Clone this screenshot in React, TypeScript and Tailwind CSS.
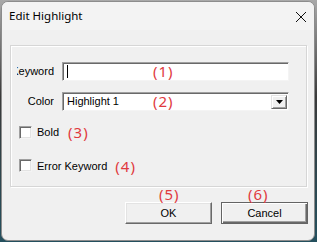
import React from "react";

const ui = { fontFamily: '"Liberation Sans", Arial, sans-serif' };
const red = { fontFamily: '"Noto Sans", "Open Sans", sans-serif' };

function Anno({ n, className }: { n: number; className?: string }) {
  return (
    <span
      style={red}
      className={`text-[15px] leading-[16px] tracking-[1px] text-[#e03a3e] whitespace-nowrap ${className ?? ""}`}
    >
      ({n})
    </span>
  );
}

function CheckBox() {
  return (
    <div className="w-[13px] h-[13px] bg-white border border-t-[#a0a0a0] border-l-[#a0a0a0] border-b-[#f4f4f4] border-r-[#f4f4f4] shadow-[inset_1px_1px_0_#696969,inset_-1px_-1px_0_#e3e3e3] shrink-0" />
  );
}

function Button({ label, isDefault, anno, annoLeft }: { label: string; isDefault?: boolean; anno: number; annoLeft: string }) {
  return (
    <div className="relative">
      <Anno n={anno} className={`absolute top-[-16px] ${annoLeft}`} />
      <div
        className={`w-[87px] h-[22px] flex items-center justify-center bg-[#f0f0f0] text-[11px] text-black ${
          isDefault
            ? "border border-[#646464] shadow-[inset_1px_1px_0_#ffffff,inset_-1px_-1px_0_#696969,inset_-2px_-2px_0_#a0a0a0]"
            : "border border-t-white border-l-white border-b-[#696969] border-r-[#696969] shadow-[inset_-1px_-1px_0_#a0a0a0,inset_1px_1px_0_#e3e3e3]"
        }`}
      >
        {label}
      </div>
    </div>
  );
}

export default function App() {
  return (
    <div className="w-[317px] h-[242px] bg-[linear-gradient(180deg,#a9a9a9_0%,#3a3a3a_40%,#24505e_100%)] overflow-hidden" style={ui}>
      <div className="ml-[1px] mt-[1px] w-[314px] h-[240px] rounded-[7px] border border-[#8c8c8c] bg-[#f0f0f0] overflow-hidden flex flex-col">
        {/* title bar */}
        <div className="h-[28px] bg-[#f3f3f3] flex items-center justify-between pl-[7px] pr-[7px] shrink-0">
          <span style={{ fontFamily: '"Noto Sans", "Open Sans", sans-serif' }} className="text-[11.5px] text-black">
            Edit Highlight
          </span>
          <svg width="12" height="12" viewBox="0 0 12 12" className="mt-[1px]">
            <path d="M1 1 L11 11 M11 1 L1 11" stroke="#111" strokeWidth="1" />
          </svg>
        </div>

        {/* group box */}
        <div className="mt-[15px] ml-[8px] w-[297px] h-[142px] border border-[#d6d6d6] shadow-[inset_1px_1px_0_#ffffff,1px_1px_0_#ffffff] flex flex-col pt-[16px] text-[11px] text-black">
          {/* keyword row */}
          <div className="flex items-center">
            <div className="ml-[6px] w-[37px] overflow-hidden flex justify-end whitespace-nowrap">Keyword</div>
            <div className="relative ml-[8px] w-[227px] h-[19px] bg-white border border-t-[#a0a0a0] border-l-[#a0a0a0] border-b-[#f4f4f4] border-r-[#f4f4f4] shadow-[inset_1px_1px_0_#696969] flex items-center pl-[4px]">
              <div className="w-[1px] h-[13px] bg-black" />
              <Anno n={1} className="absolute left-[90px] top-[0px]" />
            </div>
          </div>
          {/* color row */}
          <div className="flex items-center mt-[11px]">
            <div className="ml-[6px] w-[37px] overflow-hidden flex justify-end whitespace-nowrap">Color</div>
            <div className="relative ml-[8px] w-[227px] h-[19px] bg-white border border-t-[#a0a0a0] border-l-[#a0a0a0] border-b-[#f4f4f4] border-r-[#f4f4f4] shadow-[inset_1px_1px_0_#696969] flex items-center pl-[4px] pr-[1px]">
              <span className="flex-1">Highlight 1</span>
              <Anno n={2} className="absolute left-[90px] top-[0px]" />
              <div className="w-[16px] h-[14px] bg-[#f0f0f0] border border-t-[#e3e3e3] border-l-[#e3e3e3] border-b-[#696969] border-r-[#696969] shadow-[inset_1px_1px_0_#ffffff,inset_-1px_-1px_0_#a0a0a0] flex items-center justify-center">
                <svg width="7" height="4" viewBox="0 0 7 4">
                  <path d="M0 0 H7 L3.5 4 Z" fill="#000" />
                </svg>
              </div>
            </div>
          </div>
          {/* bold */}
          <div className="flex items-center mt-[13px] pl-[8px]">
            <CheckBox />
            <span className="ml-[5px]">Bold</span>
            <Anno n={3} className="ml-[9px]" />
          </div>
          {/* error keyword */}
          <div className="flex items-center mt-[17px] pl-[8px]">
            <CheckBox />
            <span className="ml-[5px]">Error Keyword</span>
            <Anno n={4} className="ml-[8px]" />
          </div>
        </div>

        {/* buttons */}
        <div className="flex justify-end gap-[9px] mt-[15px] pr-[6px]">
          <Button label="OK" anno={5} annoLeft="left-[34px]" />
          <Button label="Cancel" isDefault anno={6} annoLeft="left-[27px]" />
        </div>
      </div>
    </div>
  );
}
